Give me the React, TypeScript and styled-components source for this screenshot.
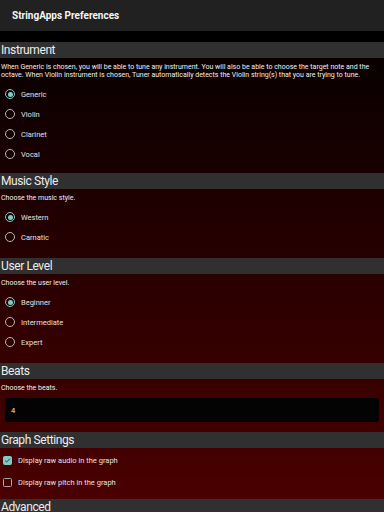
import React from 'react';
import styled, { createGlobalStyle } from 'styled-components';

const GlobalStyle = createGlobalStyle`
  html, body {
    margin: 0;
    padding: 0;
    background: #000;
    font-family: Roboto, "Liberation Sans", sans-serif;
  }
`;

const Screen = styled.div`
  width: 384px;
  height: 512px;
  overflow: hidden;
  display: flex;
  flex-direction: column;
  background: #000;
`;

const AppBar = styled.div`
  height: 31px;
  flex-shrink: 0;
  display: flex;
  align-items: center;
  padding-left: 12px;
  background-color: #212121;
  color: #f5f5f5;
  font-size: 10px;
  font-weight: 700;
`;

const Content = styled.div`
  margin-top: 11px;
  flex: 1;
  display: flex;
  flex-direction: column;
  background: linear-gradient(to bottom, #070000 0%, #4d0000 100%);
`;

const SectionHeader = styled.div`
  height: 16px;
  flex-shrink: 0;
  display: flex;
  align-items: center;
  padding-left: 1px;
  background-color: #303030;
  color: #ececec;
  font-size: 12px;
  letter-spacing: -0.4px;
`;

const SectionBody = styled.div<{ $top?: number; $bottom?: number }>`
  display: flex;
  flex-direction: column;
  padding: ${p => p.$top ?? 5}px 0 ${p => p.$bottom ?? 11}px 0;
`;

const Description = styled.p`
  margin: 0 0 5px 0;
  padding-left: 1px;
  max-width: 375px;
  font-size: 7px;
  line-height: 8px;
  color: #f0f0f0;
`;

const OptionRow = styled.div<{ $height?: number }>`
  height: ${p => p.$height ?? 20}px;
  display: flex;
  align-items: center;
  gap: 6px;
  padding-left: 5px;
  font-size: 7.5px;
  color: #e2e2e2;
`;

const RadioCircle = styled.span<{ $checked?: boolean }>`
  width: 10px;
  height: 10px;
  box-sizing: border-box;
  border-radius: 50%;
  border: 1.3px solid ${p => (p.$checked ? '#80cbc4' : '#b8b8b8')};
  display: flex;
  align-items: center;
  justify-content: center;

  &::after {
    content: '';
    width: 5px;
    height: 5px;
    border-radius: 50%;
    background: ${p => (p.$checked ? '#80cbc4' : 'transparent')};
  }
`;

const CheckBox = styled.span<{ $checked?: boolean }>`
  width: 9px;
  height: 9px;
  margin-left: -2px;
  box-sizing: border-box;
  border-radius: 1.5px;
  border: 1.3px solid ${p => (p.$checked ? '#80cbc4' : '#a8a8a8')};
  background: ${p => (p.$checked ? '#80cbc4' : 'transparent')};
  display: flex;
  align-items: center;
  justify-content: center;
`;

const InputBox = styled.div`
  margin: 1px 5px 0 5px;
  height: 24px;
  display: flex;
  align-items: center;
  padding-left: 6px;
  border-radius: 3px;
  background-color: #030303;
  color: #e6e6e6;
  font-size: 7.5px;
`;

const Radio: React.FC<{ label: string; checked?: boolean }> = ({ label, checked }) => (
  <OptionRow>
    <RadioCircle $checked={checked} />
    <span>{label}</span>
  </OptionRow>
);

const Check: React.FC<{ label: string; checked?: boolean }> = ({ label, checked }) => (
  <OptionRow $height={22}>
    <CheckBox $checked={checked}>
      {checked && (
        <svg width="7" height="7" viewBox="0 0 24 24">
          <path d="M4 12.5l5 5L20 6" fill="none" stroke="#1d2b2a" strokeWidth="3" />
        </svg>
      )}
    </CheckBox>
    <span>{label}</span>
  </OptionRow>
);

const App: React.FC = () => {
  return (
    <>
      <GlobalStyle />
      <Screen>
        <AppBar>StringApps Preferences</AppBar>
        <Content>
          <SectionHeader>Instrument</SectionHeader>
          <SectionBody $bottom={9}>
            <Description>
              When Generic is chosen, you will be able to tune any instrument. You will also be able to choose the target note and the
              octave. When Violin instrument is chosen, Tuner automatically detects the Violin string(s) that you are trying to tune.
            </Description>
            <Radio label="Generic" checked />
            <Radio label="Violin" />
            <Radio label="Clarinet" />
            <Radio label="Vocal" />
          </SectionBody>

          <SectionHeader>Music Style</SectionHeader>
          <SectionBody>
            <Description>Choose the music style.</Description>
            <Radio label="Western" checked />
            <Radio label="Carnatic" />
          </SectionBody>

          <SectionHeader>User Level</SectionHeader>
          <SectionBody>
            <Description>Choose the user level.</Description>
            <Radio label="Beginner" checked />
            <Radio label="Intermediate" />
            <Radio label="Expert" />
          </SectionBody>

          <SectionHeader>Beats</SectionHeader>
          <SectionBody $bottom={10}>
            <Description>Choose the beats.</Description>
            <InputBox>4</InputBox>
          </SectionBody>

          <SectionHeader>Graph Settings</SectionHeader>
          <SectionBody $top={1} $bottom={6}>
            <Check label="Display raw audio in the graph" checked />
            <Check label="Display raw pitch in the graph" />
          </SectionBody>

          <SectionHeader>Advanced</SectionHeader>
        </Content>
      </Screen>
    </>
  );
};

export default App;
